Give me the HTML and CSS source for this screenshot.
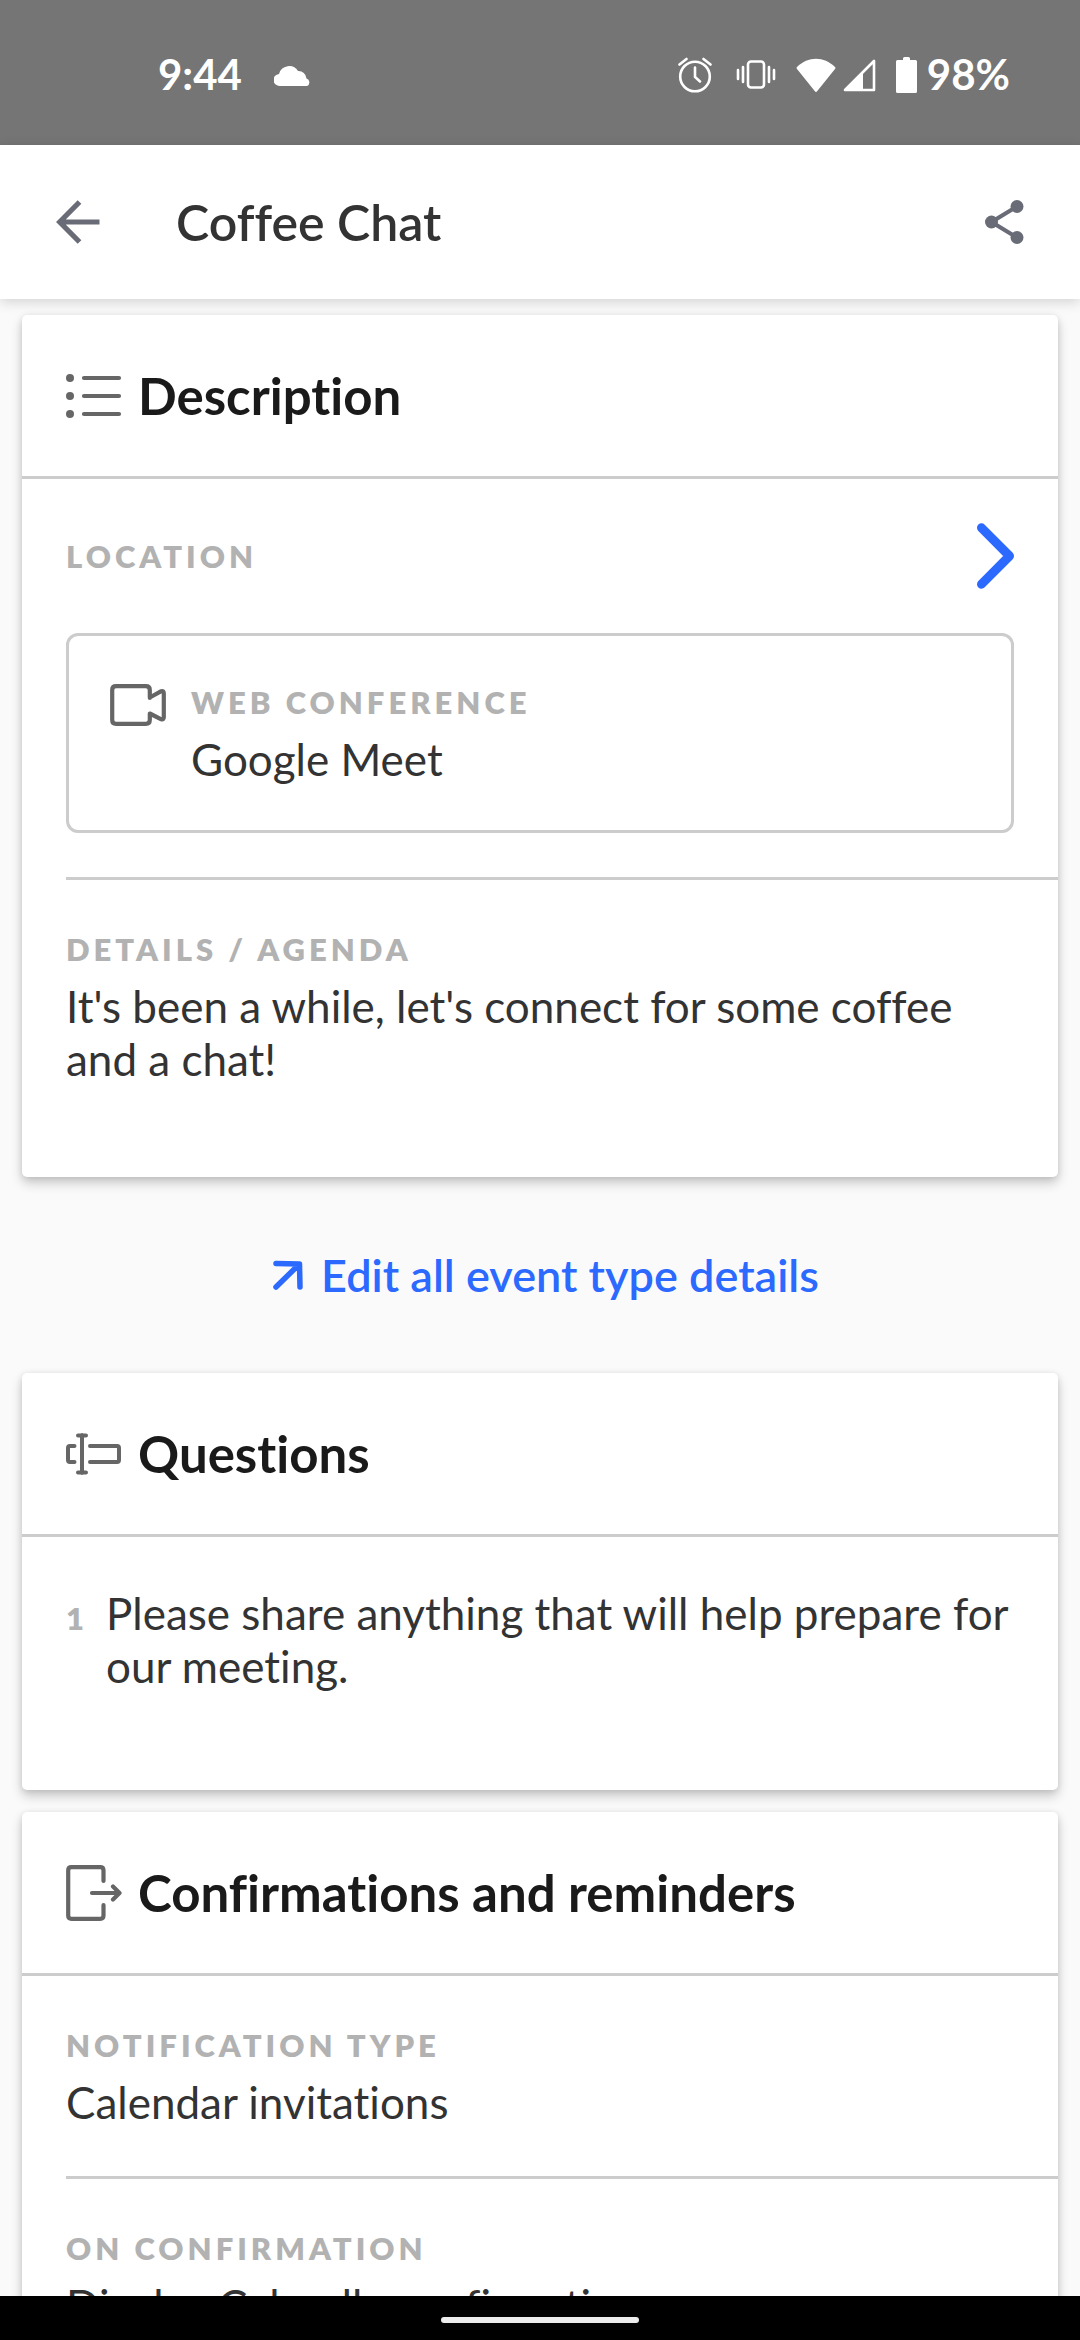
FILE: index.html
```html
<!DOCTYPE html>
<html lang="en">
<head>
<meta charset="utf-8">
<meta name="viewport" content="width=device-width, initial-scale=1">
<title>Coffee Chat</title>
<link rel="stylesheet" href="styles.css">
</head>
<body>
<div class="app">
  <div class="status">
    <span class="status-text">9:44</span>
    <svg class="status-cloud" width="38" height="24" viewBox="0 0 38 24" fill="#fff" aria-hidden="true"><path d="M6 23a6 6 0 0 1-1-12A10.500 10.500 0 0 1 24 8a8 8 0 0 1 8.500 7.500A4 4 0 0 1 33 23z"/></svg>
    <div class="status-icons">
      <svg class="status-alarm" width="34" height="36" viewBox="0 0 34 36" fill="none" stroke="#fff" stroke-width="2.600" stroke-linecap="round" aria-hidden="true"><circle cx="17" cy="19.500" r="14.800"/><path d="M17 10.500v9.500l5 4.500M1.500 7.500l7-5.500M32.500 7.500l-7-5.500"/></svg>
      <svg class="status-vibrate" width="40" height="32" viewBox="0 0 40 32" fill="none" stroke="#fff" stroke-width="2.600" stroke-linecap="round" aria-hidden="true"><rect x="12" y="2.500" width="16" height="26" rx="3"/><path d="M7 8v15M33 8v15M2 11v9M38 11v9"/></svg>
      <svg class="status-wifi" width="40" height="36" viewBox="0 0 40 36" fill="#fff" aria-hidden="true"><path d="M1 10C12-1 28-1 39 10a1.500 1.500 0 0 1 0 2L21.300 34a1.600 1.600 0 0 1-2.600 0L1 12a1.500 1.500 0 0 1 0-2z"/></svg>
      <svg class="status-signal" width="33" height="34" viewBox="0 0 33 34" aria-hidden="true"><path d="M2 32 31 3v29z" fill="none" stroke="#fff" stroke-width="2.600" stroke-linejoin="round"/><path d="M2 32 20 14v18z" fill="#fff"/></svg>
      <svg class="status-battery" width="21" height="36" viewBox="0 0 21 36" fill="#fff" aria-hidden="true"><path d="M7 3V1.500Q7 0 8.500 0h4Q14 0 14 1.500V3h5.500Q21 3 21 4.500v30q0 1.500-1.500 1.500h-18Q0 36 0 34.500v-30Q0 3 1.500 3z"/></svg>
      <span class="status-text">98%</span>
    </div>
  </div>

  <header class="appbar">
    <button class="icon-button" type="button" aria-label="Back">
      <svg width="44" height="44" viewBox="0 0 44 44" fill="none" stroke="#696c77" stroke-width="5.200" aria-hidden="true"><path d="M43.500 22H4M23.500 2 3.700 22l19.800 20"/></svg>
    </button>
    <h1 class="appbar-title">Coffee Chat</h1>
    <button class="icon-button" type="button" aria-label="Share">
      <svg width="40" height="44" viewBox="0 0 40 44" fill="#696c77" aria-hidden="true"><path d="M33 6.500 7.500 22 33 37.500" fill="none" stroke="#696c77" stroke-width="4.200"/><circle cx="33" cy="6.500" r="6.500"/><circle cx="7.500" cy="22" r="6.500"/><circle cx="33" cy="37.500" r="6.500"/></svg>
    </button>
  </header>

  <main class="content">
    <section class="card">
      <div class="card-header">
        <svg class="card-icon" width="56" height="44" viewBox="0 0 56 44" fill="none" stroke="#666" stroke-width="4.200" stroke-linecap="round" aria-hidden="true"><path d="M18 4h35M18 22h35M18 40h35"/><g fill="#666" stroke="none"><circle cx="4" cy="4" r="4"/><circle cx="4" cy="22" r="4"/><circle cx="4" cy="40" r="4"/></g></svg>
        <h2 class="card-title">Description</h2>
      </div>
      <div class="location">
        <div class="location-head">
          <h3 class="label">Location</h3>
          <button class="icon-button" type="button" aria-label="Edit location">
            <svg width="37" height="66" viewBox="0 0 37 66" fill="none" stroke="#2c69ff" stroke-width="9" stroke-linecap="round" stroke-linejoin="round" aria-hidden="true"><path d="M4.500 4.800 32.500 33 4.500 61.200"/></svg>
          </button>
        </div>
        <div class="place">
          <svg width="56" height="42" viewBox="0 0 56 42" fill="none" stroke="#666" stroke-width="4.200" stroke-linecap="round" stroke-linejoin="round" aria-hidden="true"><path d="M39.800 14V6q0-3.800-4-3.800H6Q2.200 2.200 2.200 6v30q0 3.800 3.800 3.800h29.800q4 0 4-3.800v-6.500l11.500 5.800q2.500.7 2.500-2V9.200q0-2.700-2.500-2L39.800 13.500"/></svg>
          <div>
            <h4 class="label">Web conference</h4>
            <p class="value">Google Meet</p>
          </div>
        </div>
      </div>
      <div class="field">
        <h3 class="label">Details / Agenda</h3>
        <p class="value">It's been a while, let's connect for some coffee and a chat!</p>
      </div>
    </section>

    <div class="edit-row">
      <a class="edit-link" href="#edit">
        <svg width="30" height="30" viewBox="0 0 30 30" fill="none" stroke="#2c69ff" stroke-width="5.500" stroke-linecap="round" stroke-linejoin="round" aria-hidden="true"><path d="M3 3.500 26.500 4 27 27M26 4.500 3 27"/></svg>
        Edit all event type details
      </a>
    </div>

    <section class="card">
      <div class="card-header">
        <svg class="card-icon" width="56" height="42" viewBox="0 0 56 42" fill="none" stroke="#666" stroke-width="4" stroke-linecap="round" stroke-linejoin="round" aria-hidden="true"><path d="M16 2v38M12 2.500h8M12 39.500h8M8.500 13H4q-2 0-2 2v12q0 2 2 2h4.500M24 13h27q2 0 2 2v12q0 2-2 2H24"/></svg>
        <h2 class="card-title">Questions</h2>
      </div>
      <div class="question">
        <span class="question-number">1</span>
        <p class="value">Please share anything that will help prepare for our meeting.</p>
      </div>
    </section>

    <section class="card">
      <div class="card-header">
        <svg class="card-icon" width="56" height="56" viewBox="0 0 56 56" fill="none" stroke="#666" stroke-width="4.200" stroke-linecap="round" stroke-linejoin="round" aria-hidden="true"><path d="M37.500 16V5.500q0-3.300-3.300-3.300H5.500q-3.300 0-3.300 3.300v45q0 3.300 3.300 3.300h28.700q3.300 0 3.300-3.300V40M26 28h27M47 21.500l6.500 6.500-6.500 6.500"/></svg>
        <h2 class="card-title">Confirmations and reminders</h2>
      </div>
      <div class="field">
        <h3 class="label">Notification type</h3>
        <p class="value">Calendar invitations</p>
      </div>
      <div class="field">
        <h3 class="label">On confirmation</h3>
        <p class="value">Display Calendly confirmation page</p>
      </div>
    </section>
  </main>

  <div class="navbar"><span class="navbar-handle"></span></div>
</div>
</body>
</html>
```

FILE: styles.css
```css
* {
  box-sizing: border-box;
}

body,
h1,
h2,
h3,
h4,
p {
  margin: 0;
}

body {
  background: #fafafa;
  color: #333;
  font-family: Lato, "Noto Sans", sans-serif;
  font-size: 44px;
  font-variant-ligatures: none;
  line-height: 53px;
}

svg {
  display: block;
  flex: none;
}

.app {
  display: flex;
  flex-direction: column;
  height: 100vh;
}

/* System status bar */
.status {
  display: flex;
  flex: none;
  align-items: center;
  height: 145px;
  padding: 4px 70px 0 158px;
  background: #757575;
}

.status-text {
  color: #fff;
  font-size: 42px;
  font-weight: 700;
}

.status-cloud {
  margin-left: 32px;
}

.status-icons {
  display: flex;
  align-items: center;
  margin-left: auto;
}

.status-vibrate {
  margin-left: 24px;
}

.status-wifi {
  margin-left: 20px;
}

.status-signal {
  margin-left: 7px;
}

.status-battery {
  margin: 0 10px 0 20px;
}

/* App bar */
.appbar {
  display: flex;
  position: relative;
  z-index: 1;
  flex: none;
  align-items: center;
  height: 154px;
  padding: 0 56px;
  background: #fff;
  box-shadow: 0 3px 12px rgba(0, 0, 0, 0.16);
}

.appbar-title {
  flex: 1;
  margin-left: 76px;
  font-size: 50px;
  font-weight: 600;
}

.icon-button {
  padding: 0;
  border: 0;
  background: none;
  cursor: pointer;
}

/* Scrolling content */
.content {
  flex: 1;
  min-height: 0;
  padding: 16px 22px 0;
  overflow-y: auto;
  scrollbar-width: none;
}

.card {
  padding-bottom: 44px;
  border-radius: 5px;
  background: #fff;
  box-shadow: 0 6px 12px rgba(0, 0, 0, 0.2), 0 1px 6px rgba(0, 0, 0, 0.1);
}

.card + .card {
  margin-top: 22px;
}

.card-header {
  display: flex;
  align-items: center;
  gap: 16px;
  height: 164px;
  padding: 0 44px;
  border-bottom: 3px solid #ccc;
}

.card-title {
  color: #1a1a1a;
  font-size: 51px;
  font-weight: 700;
}

.label {
  color: #b2b2b2;
  font-size: 31px;
  font-weight: 800;
  line-height: 50px;
  letter-spacing: 4px;
  text-transform: uppercase;
}

.label + .value {
  margin-top: 6px;
}

.location {
  padding: 44px;
}

.location-head {
  display: flex;
  align-items: center;
  justify-content: space-between;
  margin-bottom: 44px;
}

.place {
  display: flex;
  gap: 25px;
  padding: 41px 41px 44px;
  border: 3px solid #ccc;
  border-radius: 12px;
}

.place svg {
  margin-top: 7px;
}

.field {
  margin-left: 44px;
  padding: 44px 44px 47px 0;
}

.location + .field,
.field + .field {
  border-top: 3px solid #ccc;
}

.edit-row {
  display: flex;
  align-items: center;
  justify-content: center;
  height: 196px;
  padding-left: 12px;
}

.edit-link {
  display: flex;
  align-items: center;
  gap: 18px;
  color: #2c69ff;
  font-size: 45px;
  font-weight: 600;
  text-decoration: none;
}

.question {
  display: flex;
  gap: 22px;
  align-items: baseline;
  padding: 50px 44px 53px;
}

.question-number {
  width: 18px;
  color: #b2b2b2;
  font-size: 31px;
  font-weight: 800;
}

/* System navigation bar */
.navbar {
  display: flex;
  flex: none;
  justify-content: center;
  padding: 21px 0 17px;
  background: #000;
}

.navbar-handle {
  width: 198px;
  height: 6px;
  border-radius: 3px;
  background: #ececec;
}
```
